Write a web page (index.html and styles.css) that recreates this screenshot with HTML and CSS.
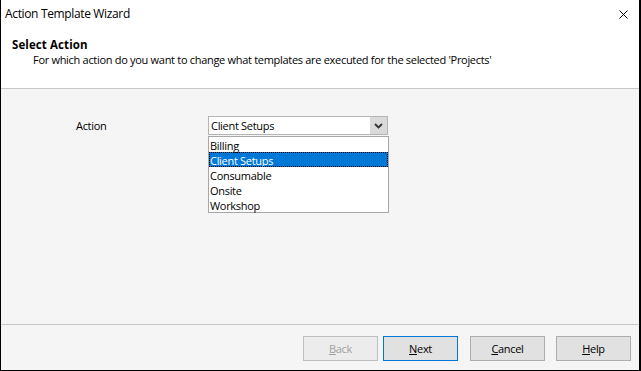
FILE: index.html
```html
<!DOCTYPE html>
<html>
<head>
<meta charset="utf-8">
<link rel="stylesheet" href="styles.css">
</head>
<body>
<div class="window">
  <div class="titlebar">
    <span class="title">Action Template Wizard</span>
    <svg class="close" width="9" height="9" viewBox="0 0 9 9"><path d="M0.5 0.5 L8.5 8.5 M8.5 0.5 L0.5 8.5" stroke="#000" stroke-width="1" fill="none"/></svg>
  </div>
  <div class="header">
    <div class="h-title">Select Action</div>
    <div class="h-sub">For which action do you want to change what templates are executed for the selected 'Projects'</div>
  </div>
  <div class="content">
    <div class="row">
      <label class="label">Action</label>
      <div class="combo-wrap">
        <div class="combo">
          <span class="combo-text">Client Setups</span>
          <span class="combo-btn"><svg width="9" height="6" viewBox="0 0 9 6"><path d="M1 1 L4.5 4.5 L8 1" stroke="#333" stroke-width="1.8" fill="none"/></svg></span>
        </div>
        <ul class="list">
          <li>Billing</li>
          <li class="sel">Client Setups</li>
          <li>Consumable</li>
          <li>Onsite</li>
          <li>Workshop</li>
        </ul>
      </div>
    </div>
  </div>
  <div class="footer">
    <button class="btn disabled"><u>B</u>ack</button>
    <button class="btn default"><u>N</u>ext</button>
    <button class="btn"><u>C</u>ancel</button>
    <button class="btn"><u>H</u>elp</button>
  </div>
</div>
</body>
</html>
```
FILE: styles.css
```css
* { box-sizing: border-box; }
html, body { margin: 0; padding: 0; background: #fff; }
body { font-family: "Segoe UI", "Open Sans", sans-serif; font-size: 11px; color: #000; letter-spacing: -0.3px; }
.window {
  width: 641px; height: 371px;
  border-left: 1px solid #000; border-right: 2px solid #000; border-bottom: 1px solid #000;
  display: flex; flex-direction: column; background: #fff;
}
.titlebar { height: 28px; display: flex; align-items: center; justify-content: space-between; padding: 0 11px 0 4px; }
.title { font-size: 12px; letter-spacing: -0.35px; line-height: 16px; }
.close { display: block; }
.header { height: 61px; border-bottom: 1px solid #c8c8c8; padding: 9px 0 0 11px; }
.h-title { font-weight: bold; font-size: 11.5px; letter-spacing: 0.1px; line-height: 15px; }
.h-sub { padding-left: 21px; line-height: 15px; }
.content { flex: 1; background: #f5f5f5; padding: 27px 0 0 75px; border-bottom: 1px solid #c8c8c8; }
.row { display: flex; align-items: flex-start; }
.label { width: 132px; line-height: 20px; }
.combo-wrap { position: relative; width: 181px; }
.combo { width: 180px; height: 19px; border: 1px solid #b4b4b4; background: #fff; display: flex; }
.combo-text { flex: 1; padding-left: 2px; line-height: 18px; }
.combo-btn { width: 17px; background: #dadada; display: flex; align-items: center; justify-content: center; }
.combo-btn svg { display: block; }
.list { position: absolute; left: 0; top: 20px; width: 181px; margin: 0; padding: 0; list-style: none; background: #fff; border: 1px solid #a7a7a7; }
.list li { height: 15px; line-height: 15px; padding: 1px 0 0 1px; }
.list li.sel { background: #0078d7; color: #fff; outline: 1px dotted #000; outline-offset: -1px; }
.footer { height: 45px; background: #f5f5f5; display: flex; align-items: flex-start; padding: 11px 0 0 302px; }
.btn { width: 75px; height: 25px; margin: 0; padding: 0; font: inherit; letter-spacing: inherit; background: #e1e1e1; border: 1px solid #adadad; color: #000; }
.btn + .btn { margin-left: 11px; }
.btn.default + .btn { margin-left: 12px; }
.btn.default { border-color: #0078d7; margin-left: 5px; }
.btn.disabled { color: #a0a0a0; background: #ececec; border-color: #bfbfbf; }
.btn.disabled u { text-decoration-color: #a0a0a0; }
```
